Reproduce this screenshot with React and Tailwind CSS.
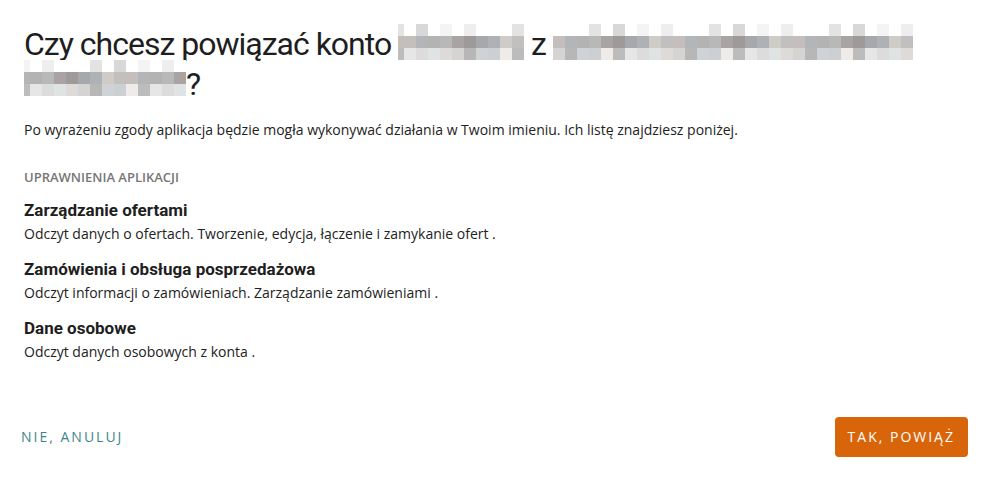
import React from 'react';

const TOPS = ['bg-white', 'bg-[#f4f4f4]', 'bg-white', 'bg-[#e4e3e2]', 'bg-white', 'bg-[#eeeeef]', 'bg-white', 'bg-[#d8d8d9]', 'bg-white', 'bg-white'];
const MIDS = ['bg-[#b4b3b3]', 'bg-[#c2c0be]', 'bg-[#a6a8ab]', 'bg-[#b9b8b8]', 'bg-[#c4bfbc]', 'bg-[#aeb1b6]', 'bg-[#a9a4a3]', 'bg-[#b2b6b9]', 'bg-[#cfccc8]', 'bg-[#9e9a9a]'];
const BOTS = ['bg-[#dcdcdc]', 'bg-[#d6d4d2]', 'bg-[#cdd0d3]', 'bg-[#e6e6e6]', 'bg-[#dedad7]', 'bg-[#d0d3d6]', 'bg-[#bcbcbc]', 'bg-[#e0e3e4]', 'bg-[#b7b7b7]', 'bg-[#eeebe8]'];

// pixelated placeholder for a hidden name
const Blur = ({ cols, seed, className, narrowFirst }) => {
  const items = Array.from({ length: cols }, (_, i) => i);
  return (
    <span className={'inline-block align-top tracking-normal ' + className}>
      <span className="flex">
        {items.map((i) => (
          <span key={i} className={'flex flex-col ' + (narrowFirst && i === 0 ? 'w-1.5' : 'w-3')}>
            <span className={'h-3 ' + TOPS[(i * 7 + seed * 3) % 10]} />
            <span className={'h-3 ' + MIDS[(i * 3 + seed) % 10]} />
            <span className={'h-3 ' + BOTS[(i * 7 + seed * 5 + 1) % 10]} />
          </span>
        ))}
      </span>
    </span>
  );
};

const permissions = [
  { title: 'Zarządzanie ofertami', desc: 'Odczyt danych o ofertach. Tworzenie, edycja, łączenie i zamykanie ofert .' },
  { title: 'Zamówienia i obsługa posprzedażowa', desc: 'Odczyt informacji o zamówieniach. Zarządzanie zamówieniami .' },
  { title: 'Dane osobowe', desc: 'Odczyt danych osobowych z konta .' },
];

export default function App() {
  return (
    <div className="w-[992px] h-[481px] bg-white px-6 flex flex-col text-[#222222] font-['Open_Sans',sans-serif]">
      <h1 className="mt-6 text-[32px] leading-[40px] tracking-[-1px] font-['Roboto',sans-serif] font-normal text-[#1e1e1e]">
        Czy chcesz powiązać konto <Blur cols={11} seed={1} narrowFirst className="" /> z{' '}
        <Blur cols={30} seed={4} className="" />
        <br />
        <Blur cols={14} seed={7} narrowFirst className="-translate-y-1" />?
      </h1>

      <p className="mt-4 text-sm leading-5">
        Po wyrażeniu zgody aplikacja będzie mogła wykonywać działania w Twoim imieniu. Ich listę znajdziesz poniżej.
      </p>

      <div className="mt-[28px] text-[13px] leading-[18px] font-semibold text-[#767676]">UPRAWNIENIA APLIKACJI</div>

      <div className="mt-[13px] flex flex-col gap-[14px]">
        {permissions.map((p) => (
          <div key={p.title}>
            <div className="text-[17px] leading-[23px] font-bold font-['Roboto',sans-serif] text-[#1e1e1e]">{p.title}</div>
            <div className="mt-0.5 text-sm leading-5">{p.desc}</div>
          </div>
        ))}
      </div>

      <div className="mt-auto mb-6 flex items-center justify-between">
        <button className="-ml-[3px] h-10 text-sm tracking-[2px] text-[#3f868d]">NIE, ANULUJ</button>
        <button className="h-10 px-[13px] rounded-sm bg-[#d9650a] text-sm tracking-[2px] text-white">TAK, POWIĄŻ</button>
      </div>
    </div>
  );
}
